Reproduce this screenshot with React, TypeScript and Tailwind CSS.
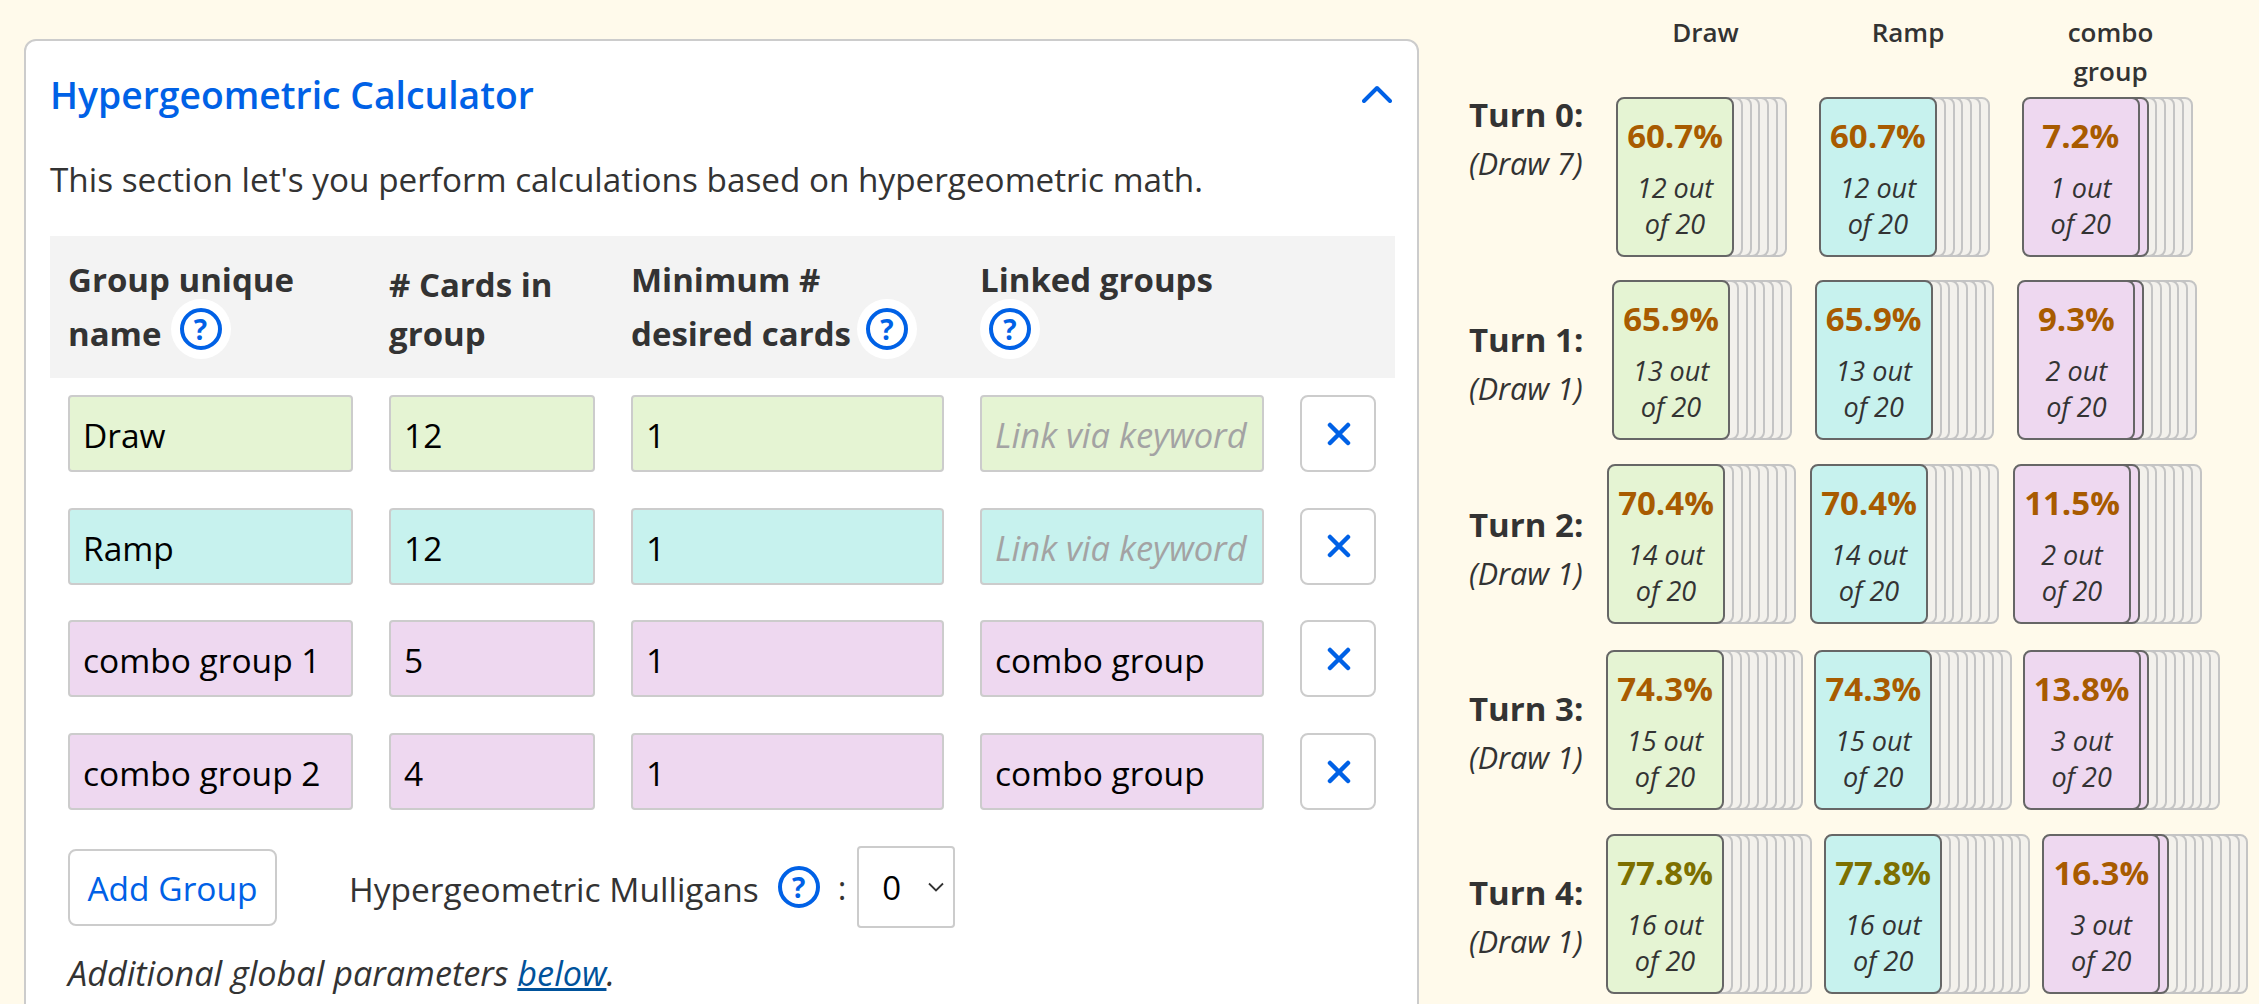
const sans = "font-['Open_Sans','Liberation_Sans',sans-serif]";

function Help({ halo = false }: { halo?: boolean }) {
  const ring = (
    <span className="flex h-[42px] w-[42px] items-center justify-center rounded-full border-[4px] border-[#0061e6] text-[28px] font-bold leading-none text-[#0061e6]">
      ?
    </span>
  );
  if (!halo) return ring;
  return (
    <span className="mb-[10px] flex h-[60px] w-[60px] shrink-0 items-center justify-center rounded-full bg-white">
      {ring}
    </span>
  );
}

const green = "bg-[#e5f4d3]";
const teal = "bg-[#c7f2ee]";
const purple = "bg-[#eed8f0]";

const inputRows = [
  { bg: green, name: "Draw", cards: "12", min: "1", link: "" },
  { bg: teal, name: "Ramp", cards: "12", min: "1", link: "" },
  { bg: purple, name: "combo group 1", cards: "5", min: "1", link: "combo group" },
  { bg: purple, name: "combo group 2", cards: "4", min: "1", link: "combo group" },
];

function Field({ bg, value, placeholder }: { bg: string; value: string; placeholder?: string }) {
  return (
    <input
      readOnly
      value={value}
      placeholder={placeholder}
      className={`h-[77px] w-full min-w-0 rounded-[4px] border-2 border-[#cccccc] px-[13px] pt-[3px] text-[33.5px] text-black outline-none placeholder:text-[34.5px] placeholder:italic placeholder:text-[#a3a3a3] ${bg}`}
    />
  );
}

type Stack = { pct: string; count: string; back: number; tint?: boolean; color?: string };
type Row = {
  turn: string;
  draw: string;
  rowMt: string;
  labelMt: string;
  firstMl: string;
  gap: string;
  stacks: Stack[];
};

const rows: Row[] = [
  {
    turn: "Turn 0:", draw: "(Draw 7)", rowMt: "mt-[6px]", labelMt: "mt-[-7px]", firstMl: "ml-[33px]", gap: "gap-[32px]",
    stacks: [
      { pct: "60.7%", count: "12 out", back: 6 },
      { pct: "60.7%", count: "12 out", back: 6 },
      { pct: "7.2%", count: "1 out", back: 6, tint: true },
    ],
  },
  {
    turn: "Turn 1:", draw: "(Draw 1)", rowMt: "mt-[23px]", labelMt: "mt-[35px]", firstMl: "ml-[29px]", gap: "gap-[23px]",
    stacks: [
      { pct: "65.9%", count: "13 out", back: 7 },
      { pct: "65.9%", count: "13 out", back: 7 },
      { pct: "9.3%", count: "2 out", back: 7, tint: true },
    ],
  },
  {
    turn: "Turn 2:", draw: "(Draw 1)", rowMt: "mt-[24px]", labelMt: "mt-[36px]", firstMl: "ml-[24px]", gap: "gap-[14.5px]",
    stacks: [
      { pct: "70.4%", count: "14 out", back: 8 },
      { pct: "70.4%", count: "14 out", back: 8 },
      { pct: "11.5%", count: "2 out", back: 8, tint: true },
    ],
  },
  {
    turn: "Turn 3:", draw: "(Draw 1)", rowMt: "mt-[26px]", labelMt: "mt-[34px]", firstMl: "ml-[23px]", gap: "gap-[11px]",
    stacks: [
      { pct: "74.3%", count: "15 out", back: 9 },
      { pct: "74.3%", count: "15 out", back: 9 },
      { pct: "13.8%", count: "3 out", back: 9, tint: true },
    ],
  },
  {
    turn: "Turn 4:", draw: "(Draw 1)", rowMt: "mt-[24px]", labelMt: "mt-[34px]", firstMl: "ml-[23px]", gap: "gap-[12px]",
    stacks: [
      { pct: "77.8%", count: "16 out", back: 10, color: "text-[#7d7000]" },
      { pct: "77.8%", count: "16 out", back: 10, color: "text-[#7d7000]" },
      { pct: "16.3%", count: "3 out", back: 10, tint: true },
    ],
  },
];

const fronts = [green, teal, purple];

function CardStack({ s, bg }: { s: Stack; bg: string }) {
  const backs = Array.from({ length: s.back }, (_, i) => i);
  return (
    <div className="isolate flex w-fit">
      <div className={`relative z-20 flex h-[160px] w-[118px] shrink-0 flex-col items-center rounded-[8px] border-2 border-[#666666] pt-[15px] ${bg}`}>
        <div className={`mb-[12px] whitespace-nowrap text-[33px] font-bold leading-[44px] ${s.color ?? "text-[#a85b00]"}`}>{s.pct}</div>
        <div className="whitespace-nowrap text-center text-[27px] italic leading-[36px] text-[#333333]">
          {s.count}
          <br />
          of 20
        </div>
      </div>
      {backs.map((i) => (
        <div
          key={i}
          style={{ zIndex: 10 - i }}
          className={`relative -ml-[109.2px] h-[160px] w-[118px] shrink-0 rounded-[8px] border-2 ${
            s.tint && i === 0 ? `border-[#666666] ${purple}` : "border-[#c4c4c4] bg-[#f3f1ec]"
          }`}
        />
      ))}
    </div>
  );
}

export default function App() {
  return (
    <div className={`flex h-[1004px] w-[2259px] items-start overflow-hidden bg-[#fffaeb] text-[#333333] ${sans}`}>
      <section className="ml-[24px] mt-[39px] h-[1100px] w-[1395px] shrink-0 rounded-[12px] border-2 border-[#cccccc] bg-white pl-[24px] pr-[22px]">
        <div className="flex items-center justify-between pr-[3px] pt-[30px]">
          <h2 className="text-[37.3px] font-semibold leading-[48px] text-[#0061e6]">Hypergeometric Calculator</h2>
          <svg width="30" height="18" viewBox="0 0 30 18" fill="none" className="mb-[2px]">
            <path d="M2 16 L15 3 L28 16" stroke="#0061e6" strokeWidth="4" strokeLinecap="round" strokeLinejoin="round" />
          </svg>
        </div>
        <p className="mt-[38px] text-[33.3px] leading-[44px]">This section let's you perform calculations based on hypergeometric math.</p>

        <div className="mt-[35px] grid h-[142px] grid-cols-[285px_206px_313px_284px_76px] gap-x-[36px] bg-[#f3f3f3] pl-[18px] text-[33px] font-bold">
          <div className="pt-[17px]">
            <div className="leading-[54px]">Group unique</div>
            <div className="flex h-[54px] items-center gap-[9px]">
              name
              <Help halo />
            </div>
          </div>
          <div className="pt-[24px] leading-[49px]">
            # Cards in
            <br />
            group
          </div>
          <div className="pt-[17px]">
            <div className="whitespace-nowrap leading-[54px]">Minimum #</div>
            <div className="flex h-[54px] items-center gap-[6px] whitespace-nowrap">
              desired cards
              <Help halo />
            </div>
          </div>
          <div className="pt-[17px]">
            <div className="whitespace-nowrap leading-[54px]">Linked groups</div>
            <div className="flex h-[54px] items-center">
              <Help halo />
            </div>
          </div>
        </div>

        <div className="mt-[17px] flex flex-col gap-y-[35.7px]">
          {inputRows.map((r) => (
            <div key={r.name} className="grid grid-cols-[285px_206px_313px_284px_76px] gap-x-[36px] pl-[18px]">
              <Field bg={r.bg} value={r.name} />
              <Field bg={r.bg} value={r.cards} />
              <Field bg={r.bg} value={r.min} />
              <Field bg={r.bg} value={r.link} placeholder="Link via keyword" />
              <button className="flex h-[77px] items-center justify-center rounded-[8px] border-2 border-[#cccccc] bg-white pl-[1px]">
                <svg width="24" height="24" viewBox="0 0 24 24" fill="none">
                  <path d="M3 3 L21 21 M21 3 L3 21" stroke="#0061e6" strokeWidth="4.5" strokeLinecap="round" />
                </svg>
              </button>
            </div>
          ))}
        </div>

        <div className="mt-[36px] flex h-[82px] items-center pl-[18px]">
          <button className="h-[77px] w-[209px] rounded-[8px] border-2 border-[#cccccc] bg-white pt-[3px] text-[33.5px] text-[#0061e6]">Add Group</button>
          <span className="ml-[72px] whitespace-nowrap pt-[4px] text-[33.5px]">Hypergeometric Mulligans</span>
          <span className="ml-[19px]">
            <Help />
          </span>
          <span className="ml-[18px] pt-[2px] text-[33px]">:</span>
          <span className="relative ml-[11px]">
            <select className="h-[82px] w-[98px] appearance-none rounded-[4px] border-2 border-[#cccccc] bg-white pl-[23px] pt-[2px] text-[33px] text-black">
              <option>0</option>
            </select>
            <svg width="18" height="10" viewBox="0 0 18 10" fill="none" className="pointer-events-none absolute right-[10px] top-[36px]">
              <path d="M2 1.5 L9 8.5 L16 1.5" stroke="#333333" strokeWidth="1.8" />
            </svg>
          </span>
        </div>
        <p className="mt-[23px] pl-[18px] text-[34.2px] italic leading-[44px]">
          Additional global parameters <a className="text-[#00529b] underline">below</a>.
        </p>
      </section>

      <div className="ml-[50px] shrink-0 pt-[13px]">
        <div className="ml-[135px] flex text-center text-[26px] font-semibold leading-[39px]">
          <div className="w-[203px]">Draw</div>
          <div className="w-[202px]">Ramp</div>
          <div className="w-[203px] px-[30px]">combo group</div>
        </div>
        <div className="flex flex-col">
          {rows.map((row) => (
            <div key={row.turn} className={`flex items-start ${row.rowMt}`}>
              <div className={`w-[114px] shrink-0 whitespace-nowrap leading-[49px] ${row.labelMt}`}>
                <div className="text-[33px] font-bold">{row.turn}</div>
                <div className="text-[30.5px] italic">{row.draw}</div>
              </div>
              <div className={`flex ${row.firstMl} ${row.gap}`}>
                {row.stacks.map((s, i) => (
                  <CardStack key={i} s={s} bg={fronts[i]} />
                ))}
              </div>
            </div>
          ))}
        </div>
      </div>
    </div>
  );
}
